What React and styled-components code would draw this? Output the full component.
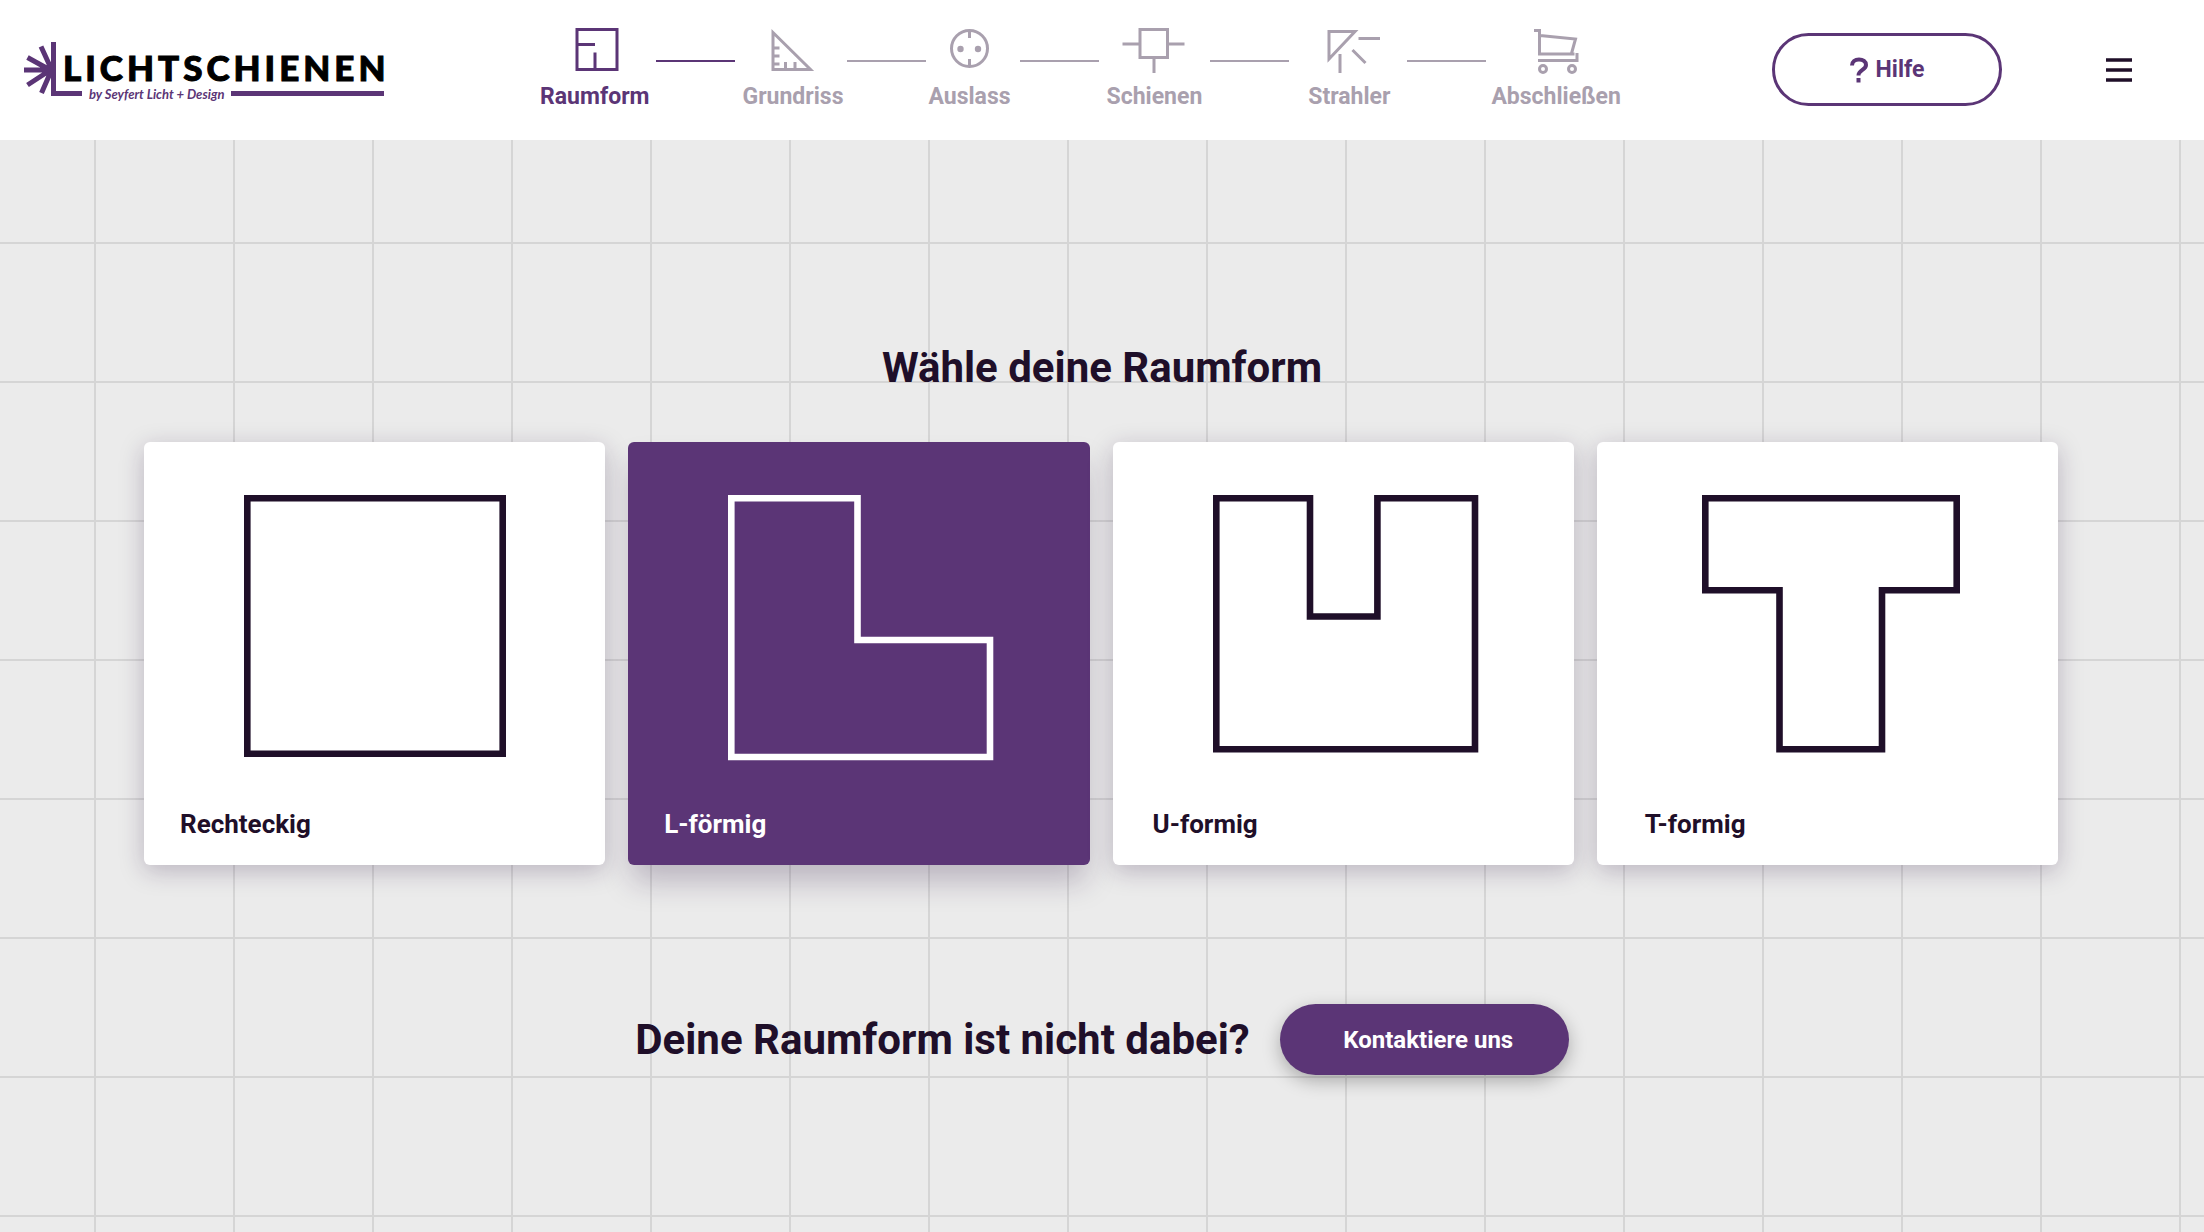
import React from 'react';
import styled, { createGlobalStyle } from 'styled-components';

const color = {
  purple: '#5b3576',
  ink: '#1f0f29',
  muted: '#a9a0ae',
  page: '#ebebeb',
  line: '#d5d5d5',
};

const GlobalStyle = createGlobalStyle`
  *, *::before, *::after { box-sizing: border-box; }
  body {
    margin: 0;
    background: ${color.page};
    color: ${color.ink};
    font-family: Roboto, "Liberation Sans", sans-serif;
    font-weight: 700;
  }
  button { font: inherit; cursor: pointer; }
`;

const Page = styled.div`
  display: flex;
  flex-direction: column;
  min-height: 100vh;
`;

const Header = styled.header`
  display: flex;
  align-items: center;
  justify-content: space-between;
  height: 140px;
  padding: 0 72px 0 24px;
  background: #fff;
`;

const Logo = styled.a`
  display: flex;
  width: 365px;
  padding: 5px 5px 0 0;
  color: ${color.purple};
  text-decoration: none;
`;

const LogoMark = styled.svg`
  flex: none;
  width: 33px;
  height: 54px;
`;

const LogoBody = styled.span`
  display: flex;
  flex: 1;
  flex-direction: column;
  min-width: 0;
  padding-top: 8px;
`;

const Wordmark = styled.span`
  padding-left: 6px;
  color: #000;
  font: 900 35px/34px Lato, sans-serif;
  letter-spacing: 4px;
  -webkit-text-stroke: 1px #000;
  white-space: nowrap;
`;

const TaglineRow = styled.span`
  display: flex;
  align-items: center;
  gap: 7px;
  height: 19px;
`;

const Tagline = styled.span`
  font: italic 700 13px/16px Lato, sans-serif;
  white-space: nowrap;
`;

const Bar = styled.span`
  flex: ${(p) => (p.$grow ? '1' : '0 0 25px')};
  height: 5px;
  background: ${color.purple};
`;

const Steps = styled.ol`
  display: flex;
  align-items: flex-start;
  margin: 0;
  padding: 0 0 1px;
  list-style: none;
`;

const StepItem = styled.li`
  display: flex;
  align-items: flex-start;
`;

const Step = styled.a`
  display: flex;
  flex-direction: column;
  align-items: center;
  padding: 0 1px;
  color: ${(p) => (p.$active ? color.purple : color.muted)};
  text-decoration: none;
`;

const StepIcon = styled.svg`
  width: 64px;
  height: 46px;
  fill: none;
  stroke: currentColor;
  stroke-width: 3;
`;

const StepLabel = styled.span`
  margin-top: 9px;
  font-size: 23px;
  line-height: 28px;
`;

const Connector = styled.span`
  width: 79px;
  height: 2px;
  margin: 32px ${(p) => p.$after}px 0 ${(p) => p.$before}px;
  background: ${(p) => (p.$active ? color.purple : color.muted)};
`;

const Actions = styled.div`
  display: flex;
  align-items: center;
  gap: 104px;
  padding-bottom: 1px;
`;

const HelpButton = styled.button`
  display: flex;
  align-items: center;
  justify-content: center;
  gap: 8px;
  width: 230px;
  height: 73px;
  border: 3px solid ${color.purple};
  border-radius: 37px;
  background: #fff;
  color: ${color.purple};
  font-size: 23px;
`;

const MenuButton = styled.button`
  display: flex;
  padding: 0;
  border: 0;
  background: none;
  color: ${color.ink};
`;

const Main = styled.main`
  flex: 1;
  padding: 203px 0 80px;
  background-image:
    linear-gradient(to right, ${color.line} 2px, transparent 2px),
    linear-gradient(to bottom, ${color.line} 2px, transparent 2px);
  background-size: 139px 139px;
  background-position: 94px 102px, 94px 102px;
`;

const Title = styled.h1`
  margin: 0;
  font-size: 42px;
  line-height: 50px;
  text-align: center;
`;

const Cards = styled.div`
  display: grid;
  grid-template-columns: repeat(4, 1fr);
  gap: 23px;
  margin: 49px 146px 0 144px;
`;

const Card = styled.button`
  display: flex;
  flex-direction: column;
  align-items: flex-start;
  justify-content: space-between;
  height: 423px;
  padding: 53px 0 23px;
  border: 0;
  border-radius: 6px;
  background: ${(p) => (p.$active ? color.purple : '#fff')};
  color: ${(p) => (p.$active ? '#fff' : color.ink)};
  box-shadow: ${(p) =>
    p.$active ? '0 20px 30px -4px rgba(45, 20, 65, 0.25)' : '0 6px 24px rgba(45, 20, 65, 0.25)'};
`;

const Shape = styled.svg`
  width: 266px;
  height: 266px;
  margin-left: ${(p) => p.$inset}px;
  fill: none;
  stroke: currentColor;
  stroke-width: 6.6;
`;

const CardLabel = styled.span`
  padding-left: ${(p) => p.$inset}px;
  font-size: 26px;
  line-height: 36px;
`;

const Contact = styled.section`
  display: flex;
  align-items: center;
  justify-content: center;
  gap: 30px;
  margin-top: 139px;
`;

const Question = styled.h2`
  margin: 0;
  font-size: 42px;
  line-height: 50px;
`;

const ContactButton = styled.button`
  width: 289px;
  height: 71px;
  padding: 0 0 0 8px;
  border: 0;
  border-radius: 36px;
  background: ${color.purple};
  color: #fff;
  font-size: 24px;
  box-shadow: 0 6px 18px rgba(0, 0, 0, 0.28);
`;

const steps = [
  {
    label: 'Raumform',
    active: true,
    before: 5,
    after: 7,
    icon: <path d="M14 1.500h40v40H14zM15.500 16.500H32M32 24.500v17" />,
  },
  {
    label: 'Grundriss',
    before: 3,
    after: 1,
    icon: <path d="M12 4.500v37h37.500zM13.500 20h5M13.500 28h5M13.500 36h5M24.500 40v-6M34 40v-6" />,
  },
  {
    label: 'Auslass',
    before: 8,
    after: 7,
    icon: (
      <>
        <circle cx="31.500" cy="20.500" r="18" />
        <path d="M31.500 2v8M31.500 31v8" />
        <circle cx="22.500" cy="21" r="3.200" fill="currentColor" stroke="none" />
        <circle cx="40" cy="21" r="3.200" fill="currentColor" stroke="none" />
      </>
    ),
  },
  {
    label: 'Schienen',
    before: 7,
    after: 18,
    icon: <path d="M18 1.500h27.500v28H18zM.5 16H17M46 16h16.500M32 30v15" />,
  },
  {
    label: 'Strahler',
    before: 16,
    after: 4,
    icon: <path d="M12 3.500h26L12 31zM41.500 10.500H63M23 26v19M35.500 22l13 13" />,
  },
  {
    label: 'Abschließen',
    icon: (
      <>
        <path d="M10 2.500h5.500V26h35M16 7.500l35.500 3.500-4 14.500M14 32.500h39V25" />
        <circle cx="19" cy="41" r="3.500" />
        <circle cx="48" cy="41" r="3.500" />
      </>
    ),
  },
];

const shapes = [
  { label: 'Rechteckig', shapeInset: 100, labelInset: 36, d: 'M3.300 3.300h255.400v255.400H3.300z' },
  {
    label: 'L-förmig',
    active: true,
    shapeInset: 100,
    labelInset: 36,
    d: 'M3.300 3.300h126.200v141.700H262v117H3.300z',
  },
  {
    label: 'U-formig',
    shapeInset: 100,
    labelInset: 40,
    d: 'M3.300 3.300H97v118.200h67.400V3.300H262v251H3.300z',
  },
  {
    label: 'T-formig',
    shapeInset: 105,
    labelInset: 48,
    d: 'M3.300 3.300h251.400v92H180v159H77.500v-159H3.300z',
  },
];

export default function App() {
  return (
    <Page>
      <GlobalStyle />
      <Header>
        <Logo href="#">
          <LogoMark viewBox="0 0 33 54" fill="none" stroke="currentColor" strokeWidth="5" aria-hidden="true">
            <path d="M29.500 0v54M0 28h28M3.500 15.500L28 29M17 4.500l11 24M3.500 43L28 27M17.500 51L28 27" />
            <path d="M27 51.500h6" />
          </LogoMark>
          <LogoBody>
            <Wordmark>LICHTSCHIENEN</Wordmark>
            <TaglineRow>
              <Bar />
              <Tagline>by Seyfert Licht + Design</Tagline>
              <Bar $grow />
            </TaglineRow>
          </LogoBody>
        </Logo>

        <nav>
          <Steps>
            {steps.map((step, i) => (
              <StepItem key={step.label}>
                <Step href="#" $active={step.active} aria-current={step.active ? 'step' : undefined}>
                  <StepIcon viewBox="0 0 64 46" aria-hidden="true">
                    {step.icon}
                  </StepIcon>
                  <StepLabel>{step.label}</StepLabel>
                </Step>
                {i < steps.length - 1 && (
                  <Connector $active={step.active} $before={step.before} $after={step.after} />
                )}
              </StepItem>
            ))}
          </Steps>
        </nav>

        <Actions>
          <HelpButton type="button">
            <svg width="18" height="26" viewBox="0 0 18 26" fill="none" stroke="currentColor" strokeWidth="4" aria-hidden="true">
              <path d="M2 8.500C2 4.500 5 2.500 9 2.500s7 2 7 5.500c0 5-7.500 5-7.500 10.500M8.500 21v4.500" />
            </svg>
            Hilfe
          </HelpButton>
          <MenuButton type="button" aria-label="Menü">
            <svg width="26" height="26" viewBox="0 0 26 26" stroke="currentColor" strokeWidth="3.500" aria-hidden="true">
              <path d="M0 3h26M0 13h26M0 23h26" />
            </svg>
          </MenuButton>
        </Actions>
      </Header>

      <Main>
        <Title>Wähle deine Raumform</Title>
        <Cards>
          {shapes.map((s) => (
            <Card key={s.label} type="button" $active={s.active} aria-pressed={!!s.active}>
              <Shape viewBox="0 0 266 266" $inset={s.shapeInset} aria-hidden="true">
                <path d={s.d} />
              </Shape>
              <CardLabel $inset={s.labelInset}>{s.label}</CardLabel>
            </Card>
          ))}
        </Cards>
        <Contact>
          <Question>Deine Raumform ist nicht dabei?</Question>
          <ContactButton type="button">Kontaktiere uns</ContactButton>
        </Contact>
      </Main>
    </Page>
  );
}
